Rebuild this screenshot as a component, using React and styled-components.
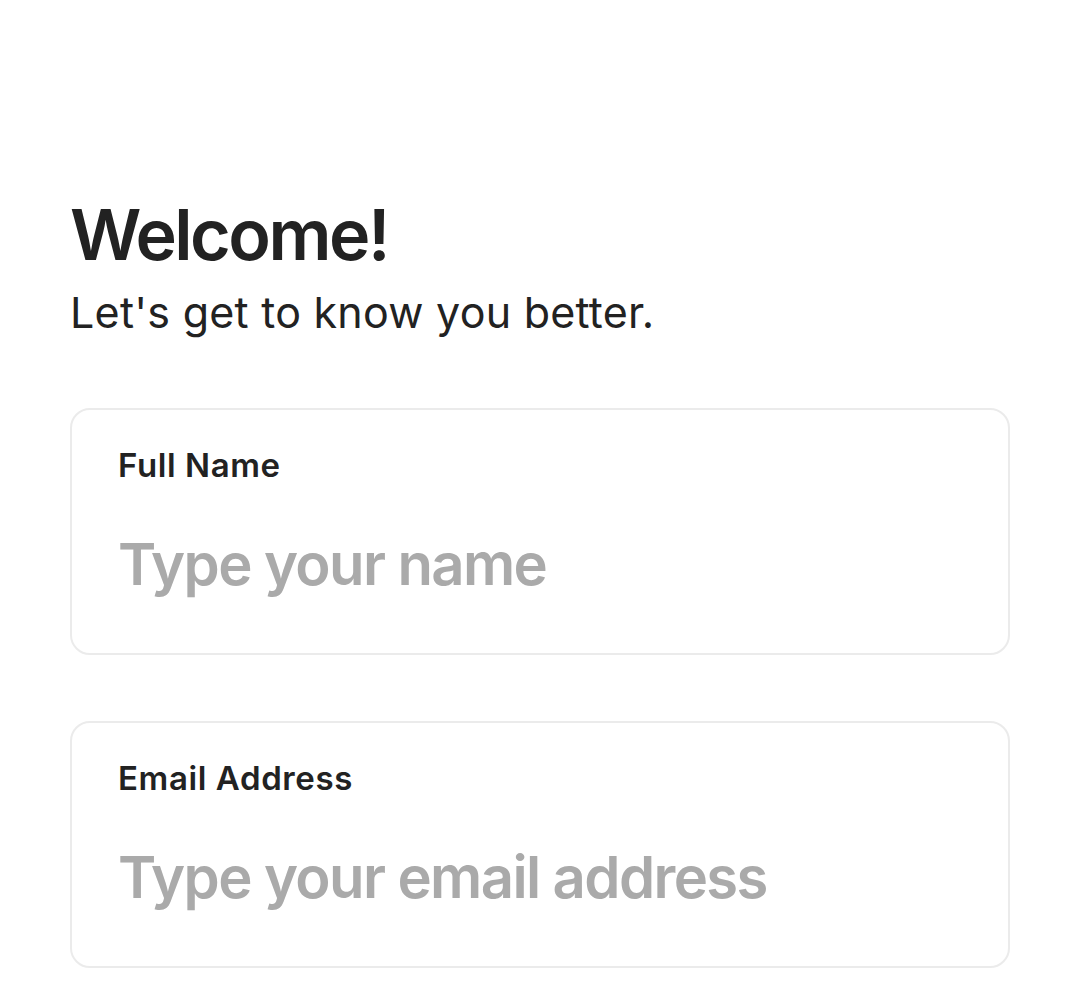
import React from 'react';
import styled, { createGlobalStyle } from 'styled-components';

const GlobalStyle = createGlobalStyle`
  * {
    box-sizing: border-box;
  }
  body {
    margin: 0;
    background: #fff;
    font-family: Inter, 'Noto Sans', sans-serif;
    color: #222;
  }
`;

const Field = ({ label, placeholder, type = 'text' }) => {
  return (
    <Card>
      <Label>{label}</Label>
      <Input type={type} placeholder={placeholder} />
    </Card>
  );
};

const App = () => {
  return (
    <>
      <GlobalStyle />
      <Page>
        <Header>
          <Title>Welcome!</Title>
          <Subtitle>Let's get to know you better.</Subtitle>
        </Header>
        <Form>
          <Field label="Full Name" placeholder="Type your name" />
          <Field label="Email Address" placeholder="Type your email address" type="email" />
        </Form>
      </Page>
    </>
  );
};

const Page = styled.div`
  display: flex;
  flex-direction: column;
  padding: 196px 70px 0;
  width: 100%;
  min-height: 993px;
`;

const Header = styled.div`
  display: flex;
  flex-direction: column;
  gap: 14px;
  margin-bottom: 69px;
`;

const Title = styled.h1`
  margin: 0;
  font-size: 70px;
  font-weight: 600;
  letter-spacing: -2.5px;
  line-height: 1.1;
  color: #222;
`;

const Subtitle = styled.p`
  margin: 0;
  font-size: 43px;
  font-weight: 400;
  letter-spacing: 0.25px;
  line-height: 1.2;
  color: #222;
`;

const Form = styled.div`
  display: flex;
  flex-direction: column;
  gap: 66px;
`;

const Card = styled.label`
  display: flex;
  flex-direction: column;
  gap: 44px;
  height: 247px;
  padding: 36px 46px 0;
  border: 2px solid #ebebeb;
  border-radius: 20px;
`;

const Label = styled.span`
  font-size: 33px;
  font-weight: 600;
  letter-spacing: 0.6px;
  line-height: 1.2;
  color: #222;
`;

const Input = styled.input`
  height: 70px;
  border: none;
  outline: none;
  padding: 0;
  background: transparent;
  font-family: Inter, 'Noto Sans', sans-serif;
  font-size: 58px;
  font-weight: 600;
  letter-spacing: -1.6px;
  line-height: 1.2;
  color: #222;
  &::placeholder {
    color: #aaa;
  }
`;

export default App;
